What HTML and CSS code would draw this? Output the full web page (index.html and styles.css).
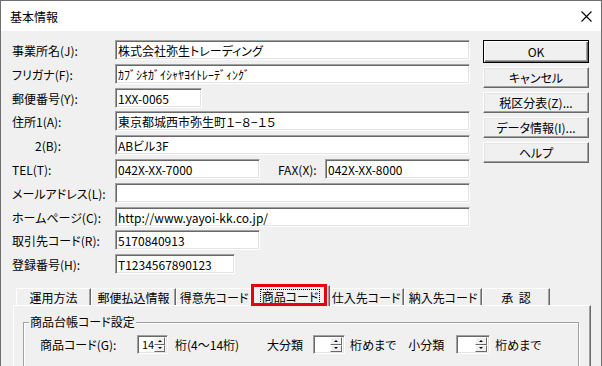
FILE: index.html
```html
<!DOCTYPE html>
<html lang="ja">
<head>
    <meta charset="UTF-8">
    <title>基本情報</title>
    <link rel="stylesheet" href="styles.css">
</head>
<body>

<div class="window">
    <div class="titlebar">
        <span class="title">基本情報</span>
        <svg class="close" width="11" height="11" viewBox="0 0 11 11">
            <path d="M0.5 0.5 L10.5 10.5 M10.5 0.5 L0.5 10.5" stroke="#000" stroke-width="1.1" fill="none"/>
        </svg>
    </div>

    <div class="content">
        <div class="top">
            <div class="fields">
                <div class="row">
                    <span class="label">事業所名(J):</span>
                    <input class="field w-full" type="text" value="株式会社弥生トレーディング">
                </div>
                <div class="row">
                    <span class="label">フリガナ(F):</span>
                    <input class="field w-full" type="text" value="ｶﾌﾞｼｷｶﾞｲｼｬﾔﾖｲﾄﾚｰﾃﾞｨﾝｸﾞ">
                </div>
                <div class="row">
                    <span class="label">郵便番号(Y):</span>
                    <input class="field w-zip" type="text" value="1XX-0065">
                </div>
                <div class="row tight">
                    <span class="label">住所1(A):</span>
                    <input class="field w-full" type="text" value="東京都城西市弥生町１−８−１５">
                </div>
                <div class="row">
                    <span class="label indent">2(B):</span>
                    <input class="field w-full" type="text" value="ABビル3F">
                </div>
                <div class="row">
                    <span class="label">TEL(T):</span>
                    <input class="field w-tel" type="text" value="042X-XX-7000">
                    <span class="label-fax">FAX(X):</span>
                    <input class="field w-fax" type="text" value="042X-XX-8000">
                </div>
                <div class="row">
                    <span class="label">メールアドレス(L):</span>
                    <input class="field w-full" type="text" value="">
                </div>
                <div class="row">
                    <span class="label">ホームページ(C):</span>
                    <input class="field w-full" type="text" value="http://www.yayoi-kk.co.jp/">
                </div>
                <div class="row tight">
                    <span class="label">取引先コード(R):</span>
                    <input class="field w-tel" type="text" value="5170840913">
                </div>
                <div class="row">
                    <span class="label">登録番号(H):</span>
                    <input class="field w-reg" type="text" value="T1234567890123">
                </div>
            </div>

            <div class="buttons">
                <button class="btn default">OK</button>
                <button class="btn">キャンセル</button>
                <button class="btn">税区分表(Z)...</button>
                <button class="btn">データ情報(I)...</button>
                <button class="btn">ヘルプ</button>
            </div>
        </div>

        <div class="tabs">
            <div class="tab">運用方法</div>
            <div class="tab">郵便払込情報</div>
            <div class="tab">得意先コード</div>
            <div class="tab active"><span class="focus">商品コード</span><span class="mark"></span></div>
            <div class="tab">仕入先コード</div>
            <div class="tab">納入先コード</div>
            <div class="tab">承&nbsp;&nbsp;認</div>
        </div>

        <div class="panel">
            <fieldset class="group">
                <legend>商品台帳コード設定</legend>
                <div class="code-row">
                    <span class="code-label">商品コード(G):</span>
                    <div class="spin s1">
                        <span class="spin-val">14</span>
                        <div class="spin-btns">
                            <span class="spin-btn"><i class="arrow up"></i></span>
                            <span class="spin-btn"><i class="arrow down"></i></span>
                        </div>
                    </div>
                    <span class="unit">桁(4〜14桁)</span>
                    <span class="cat big">大分類</span>
                    <div class="spin s2">
                        <span class="spin-val"></span>
                        <div class="spin-btns">
                            <span class="spin-btn"><i class="arrow up"></i></span>
                            <span class="spin-btn"><i class="arrow down"></i></span>
                        </div>
                    </div>
                    <span class="unit">桁めまで</span>
                    <span class="cat small">小分類</span>
                    <div class="spin s3">
                        <span class="spin-val"></span>
                        <div class="spin-btns">
                            <span class="spin-btn"><i class="arrow up"></i></span>
                            <span class="spin-btn"><i class="arrow down"></i></span>
                        </div>
                    </div>
                    <span class="unit">桁めまで</span>
                </div>
            </fieldset>
        </div>
    </div>
</div>

</body>
</html>
```

FILE: styles.css
```css
* {
    box-sizing: border-box;
}
body {
    margin: 0;
    font-family: "Noto Sans CJK JP", sans-serif;
    font-size: 12px;
    font-feature-settings: "palt";
    color: #000;
    background: #fff;
}
.window {
    width: 602px;
    height: 366px;
    border: 1px solid #6f6f6f;
    border-bottom: none;
    background: #f0f0f0;
    overflow: hidden;
}
.titlebar {
    height: 30px;
    background: #fff;
    display: flex;
    align-items: center;
    justify-content: space-between;
    padding: 1px 9px 0 9px;
}
.title {
    font-size: 12px;
}
.content {
    padding: 9px 12px 0 11px;
}
.top {
    display: flex;
    justify-content: space-between;
}
.fields {
    width: 459px;
    display: flex;
    flex-direction: column;
    gap: 4px;
}
.row {
    display: flex;
    align-items: center;
    height: 20px;
}
.row.tight {
    margin-top: -1px;
}
.label {
    width: 103px;
    flex: none;
    white-space: nowrap;
}
.label.indent {
    padding-left: 23px;
}
.label-fax {
    width: 47px;
    margin-left: 18px;
    white-space: nowrap;
}
.field {
    height: 20px;
    margin: 0;
    padding: 0 2px;
    border: 1px solid;
    border-color: #a0a0a0 #fff #fff #a0a0a0;
    box-shadow: inset 1px 1px #696969, inset -1px -1px #e3e3e3;
    background: #fff;
    font-family: "Noto Sans CJK JP", sans-serif;
    font-size: 12px;
    font-feature-settings: "palt";
    color: #000;
    outline: none;
}
.w-full { width: 355px; }
.w-zip { width: 87px; }
.w-tel { width: 145px; }
.w-fax { width: 145px; }
.w-reg { width: 120px; }

.buttons {
    width: 106px;
    display: flex;
    flex-direction: column;
    gap: 4px;
}
.btn {
    height: 21px;
    margin: 0;
    padding: 0;
    font-family: "Noto Sans CJK JP", sans-serif;
    font-size: 12px;
    font-feature-settings: "palt";
    color: #000;
    background: #f0f0f0;
    border: 1px solid;
    border-color: #fff #696969 #696969 #fff;
    box-shadow: inset -1px -1px #a0a0a0, inset 1px 1px #e3e3e3;
}
.btn.default {
    height: 23px;
    border-color: #000;
    box-shadow: inset 1px 1px #fff, inset -1px -1px #696969, inset -2px -2px #a0a0a0;
}

.tabs {
    display: flex;
    align-items: flex-end;
    height: 17px;
    margin: 14px 0 0 4px;
}
.tab {
    height: 17px;
    display: flex;
    align-items: center;
    justify-content: center;
    border: 1px solid;
    border-color: #fff #696969 transparent #fff;
    border-bottom: none;
    box-shadow: inset -1px 0 #a0a0a0;
    white-space: nowrap;
}
.tab:nth-child(1) { width: 75px; }
.tab:nth-child(2) { width: 85px; }
.tab:nth-child(3) { width: 76px; }
.tab:nth-child(4) { width: 80px; }
.tab:nth-child(5) { width: 76px; }
.tab:nth-child(6) { width: 78px; }
.tab:nth-child(7) { width: 68px; }
.tab.active {
    position: relative;
    z-index: 1;
    height: 21px;
    margin: 0 -2px -1px;
    background: #f0f0f0;
}
.focus {
    outline: 1px dotted #000;
    outline-offset: 0;
    padding: 0 1px;
    line-height: 13px;
}
.mark {
    position: absolute;
    left: 0;
    top: -2px;
    right: 2px;
    bottom: 0;
    border: 3px solid #e60012;
}

.panel {
    height: 62px;
    margin: 0 -2px 0 1px;
    border-top: 1px solid #fff;
    border-left: 1px solid #fff;
    border-right: 1px solid #696969;
    box-shadow: inset -1px 0 #a0a0a0;
    padding: 8px 11px 0 9px;
}
.group {
    margin: 0;
    height: 60px;
    padding: 5px 0 0 16px;
    border: 1px solid #a0a0a0;
    box-shadow: inset 1px 1px #fff, 1px 1px #fff;
}
.group legend {
    margin-left: -11px;
    padding: 0 1px;
    line-height: 16px;
    background: #f0f0f0;
}
.code-row {
    display: flex;
    align-items: center;
    height: 19px;
    white-space: nowrap;
}
.code-label {
    width: 97px;
}
.spin {
    display: flex;
    height: 19px;
    border: 1px solid;
    border-color: #a0a0a0 #fff #fff #a0a0a0;
    box-shadow: inset 1px 1px #696969, inset -1px -1px #e3e3e3;
    background: #fff;
    padding: 1px 2px 1px 1px;
}
.s1 { width: 31px; }
.s2 { width: 32px; }
.s3 { width: 34px; }
.spin-val {
    flex: 1;
    padding-left: 3px;
    font-size: 11px;
    line-height: 15px;
}
.spin-btns {
    width: 12px;
    display: flex;
    flex-direction: column;
}
.spin-btn {
    flex: 1;
    display: flex;
    align-items: center;
    justify-content: center;
    background: #f0f0f0;
    border: 1px solid;
    border-color: #fff #696969 #696969 #fff;
}
.arrow {
    width: 0;
    height: 0;
    border-left: 2px solid transparent;
    border-right: 2px solid transparent;
}
.arrow.up {
    border-bottom: 2px solid #000;
}
.arrow.down {
    border-top: 2px solid #000;
}
.unit {
    margin-left: 8px;
}
.spin + .unit {
    margin-left: 7px;
}
.s2 + .unit,
.s3 + .unit {
    margin-left: 5px;
}
.cat.big {
    margin-left: 28px;
    margin-right: 10px;
}
.cat.small {
    margin-left: 12px;
    margin-right: 12px;
}
```
